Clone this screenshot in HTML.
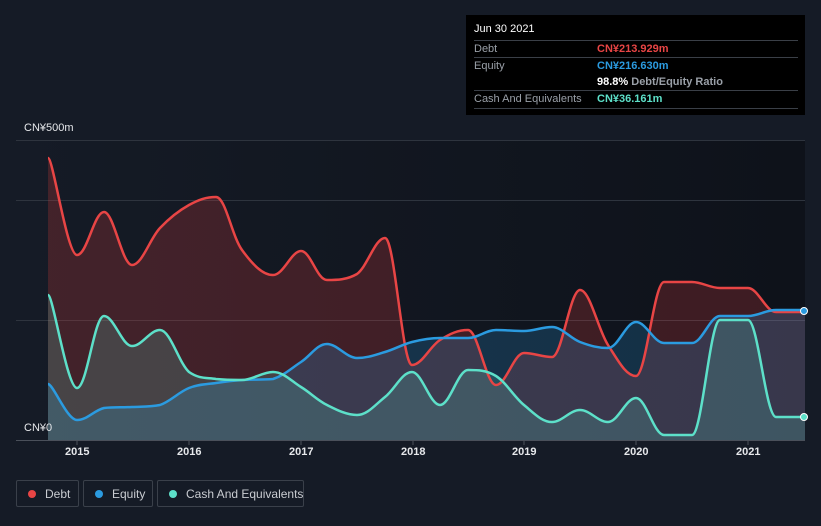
<!DOCTYPE html><html><head><style>
body{margin:0;width:821px;height:526px;background:#151b26;font-family:"Liberation Sans",sans-serif;overflow:hidden;position:relative}
.t{position:absolute;left:466px;top:15px;width:339px;height:100px;background:#000}
.r{position:absolute;left:8px;width:324px;font-size:11px;color:#9aa0a8;border-top:1px solid #3a3f47;height:17px;line-height:17px}
.r b{position:absolute;left:123px;font-weight:bold;white-space:nowrap}
.lg{position:absolute;top:480px;height:27px;border:1px solid #3a404a;border-radius:2px;color:#c9ccd1;font-size:12px;line-height:26px;box-sizing:border-box;white-space:nowrap}
.lg i{position:absolute;left:11px;top:9px;width:8px;height:8px;border-radius:50%}
.ax{position:absolute;top:446px;color:#e6e8eb;font-size:11px;font-weight:bold}
</style></head><body>
<svg width="821" height="526" style="position:absolute;left:0;top:0">
<defs><linearGradient id="bg" x1="0" x2="1"><stop offset="0" stop-color="#151b26"/><stop offset="1" stop-color="#0e121a"/></linearGradient></defs>
<rect x="16" y="140" width="789" height="300" fill="url(#bg)"/>
<g stroke="#2e343e" stroke-width="1"><line x1="16" y1="140.5" x2="805" y2="140.5"/><line x1="16" y1="200.5" x2="805" y2="200.5"/><line x1="16" y1="320.5" x2="805" y2="320.5"/></g>
<line x1="16" y1="440.5" x2="805" y2="440.5" stroke="#4a505a"/>
<path id="fd" fill="#e84040" fill-opacity="0.22"/>
<path id="fe" fill="#2b9be0" fill-opacity="0.22"/>
<path id="fc" fill="#5de0c9" fill-opacity="0.18"/>
<g fill="none" stroke-width="2.5" stroke-linejoin="round">
<path id="ld" stroke="#e84545"/><path id="le" stroke="#2b9be0"/><path id="lc" stroke="#5de0c9"/>
</g>
<circle cx="804" cy="311" r="3.5" fill="#2b9be0" stroke="#fff" stroke-width="1"/>
<circle cx="804" cy="417" r="3.5" fill="#5de0c9" stroke="#fff" stroke-width="1"/>
<g stroke="#4a505a"><line x1="77" y1="440" x2="77" y2="445"/><line x1="189" y1="440" x2="189" y2="445"/><line x1="301" y1="440" x2="301" y2="445"/><line x1="413" y1="440" x2="413" y2="445"/><line x1="524" y1="440" x2="524" y2="445"/><line x1="636" y1="440" x2="636" y2="445"/><line x1="748" y1="440" x2="748" y2="445"/></g>
</svg>
<script>
function cl(v,a,b){var lo=Math.min(a,b),hi=Math.max(a,b);return Math.max(lo,Math.min(hi,v));}
function sm(s){var p=s.split(' ').map(function(a){return a.split(',').map(Number)});var d='M'+p[0];for(var i=0;i<p.length-1;i++){var a=p[i-1]||p[i],b=p[i],c=p[i+1],e=p[i+2]||c;var t=0.18;
var y1=b[1]+(c[1]-a[1])*t,y2=c[1]-(e[1]-b[1])*t;
if((b[1]-a[1])*(c[1]-b[1])<=0)y1=b[1];if((c[1]-b[1])*(e[1]-c[1])<=0)y2=c[1];
y1=cl(y1,b[1],c[1]);y2=cl(y2,b[1],c[1]);
d+=' C'+(b[0]+(c[0]-a[0])*t)+','+y1+' '+(c[0]-(e[0]-b[0])*t)+','+y2+' '+c;}return d;}
var D="48,158 77,255 104,212 132,265 160,228 189,205 216,197 242,250 273,275 301,251 327,280 357,274 385,238 412,365 440,340 468,330 496,385 524,353 552,357 580,290 608,345 636,376 664,282 692,282 720,288 748,288 776,312 805,312";
var E="48,384 77,420 104,408 132,407 160,405 189,388 216,383 242,380 273,379 301,362 327,344 357,358 385,352 412,342 440,338 468,338 496,330 524,331 552,327 580,342 608,348 636,322 664,343 692,343 720,316 748,316 776,310 805,310";
var C="48,295 77,388 104,316 132,346 160,330 189,372 216,379 242,380 273,372 301,387 327,405 357,415 385,397 412,372 440,405 468,370 496,376 524,405 552,422 580,410 608,422 636,398 664,435 692,435 720,320 748,320 776,417 805,417";
[[D,'d'],[E,'e'],[C,'c']].forEach(function(x){var p=sm(x[0]);document.getElementById('l'+x[1]).setAttribute('d',p);document.getElementById('f'+x[1]).setAttribute('d',p+' L805,440 L48,440 Z');});
</script>
<div style="position:absolute;left:24px;top:122px;color:#e6e8eb;font-size:11px">CN¥500m</div>
<div style="position:absolute;left:24px;top:422px;color:#e6e8eb;font-size:11px">CN¥0</div>
<div class="ax" style="left:65px">2015</div><div class="ax" style="left:177px">2016</div><div class="ax" style="left:289px">2017</div><div class="ax" style="left:401px">2018</div><div class="ax" style="left:512px">2019</div><div class="ax" style="left:624px">2020</div><div class="ax" style="left:736px">2021</div>
<div class="t">
<div style="position:absolute;left:8px;top:8px;color:#fff;font-size:11px">Jun 30 2021</div>
<div class="r" style="top:25px">Debt<b style="color:#e84545">CN¥213.929m</b></div>
<div class="r" style="top:42px">Equity<b style="color:#2b9be0">CN¥216.630m</b></div>
<div class="r" style="top:59px;border-top:none"><b style="color:#fff">98.8% <span style="color:#9aa0a8">Debt/Equity Ratio</span></b></div>
<div class="r" style="top:75px;border-bottom:1px solid #3a3f47">Cash And Equivalents<b style="color:#5de0c9">CN¥36.161m</b></div>
</div>
<div class="lg" style="left:16px;width:63px"><i style="background:#e84545"></i><span style="position:absolute;left:28px">Debt</span></div>
<div class="lg" style="left:83px;width:70px"><i style="background:#2b9be0"></i><span style="position:absolute;left:28px">Equity</span></div>
<div class="lg" style="left:157px;width:147px"><i style="background:#5de0c9"></i><span style="position:absolute;left:28px">Cash And Equivalents</span></div>
</body></html>
